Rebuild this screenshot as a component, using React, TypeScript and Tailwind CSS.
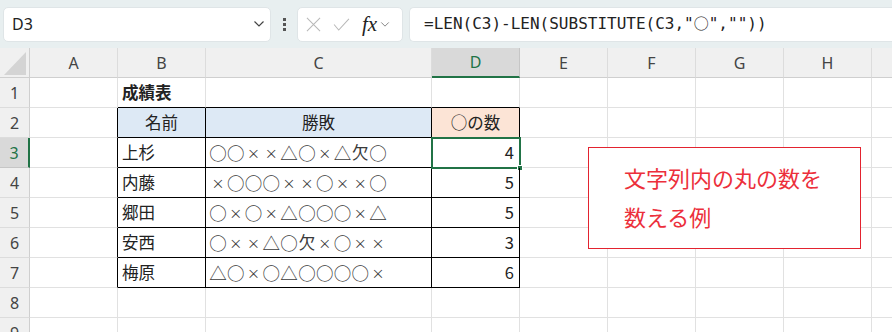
import React from 'react';

const cols = ['A', 'B', 'C', 'D', 'E', 'F', 'G', 'H', 'I'];
const colWidths = [88, 88, 226, 88, 88, 88, 88, 88, 88];

const rows = [
  { name: '上杉', result: '○○××△○×△欠○', count: 4 },
  { name: '内藤', result: '×○○○××○××○', count: 5 },
  { name: '郷田', result: '○×○×△○○○×△', count: 5 },
  { name: '安西', result: '○××△○欠×○××', count: 3 },
  { name: '梅原', result: '△○×○△○○○○×', count: 6 },
];

const jp = "font-['Noto_Sans_CJK_JP',sans-serif]";
const head = "font-['Noto_Sans',sans-serif]";

type CellProps = {
  children?: React.ReactNode;
  className?: string;
};

const Cell: React.FC<CellProps> = ({ children, className = '' }) => (
  <div className={`h-[30px] border-r border-b flex items-center overflow-visible whitespace-nowrap ${className}`}>
    {children}
  </div>
);

// each mark sits on a fixed full-width pitch; the cross is drawn smaller as in the sheet
function Marks({ text }: { text: string }) {
  return (
    <span className="flex items-center">
      {Array.from(text).map((ch, i) => (
        <span
          key={i}
          className={`inline-block w-[17.8px] text-center leading-none ${
            ch === '×' ? 'text-[13px]' : ch === '欠' ? 'text-[16.5px]' : 'text-[17.5px]'
          }`}
        >
          {ch}
        </span>
      ))}
    </span>
  );
}

function Chevron({ className = '' }: { className?: string }) {
  return (
    <svg viewBox="0 0 12 8" className={className} fill="none" stroke="currentColor" strokeWidth="1.2">
      <path d="M1.5 1.5 6 6l4.5-4.5" />
    </svg>
  );
}

function TopBar() {
  return (
    <div className="h-[48px] bg-[#e8eff0] flex items-center pl-[3px] gap-[6px]">
      <div className="w-[268px] h-[35px] bg-white rounded-[5px] border border-[#dfe5e7] flex items-center justify-between pl-[8px] pr-[5px]">
        <span className={`${head} text-[16px] text-[#222]`}>D3</span>
        <Chevron className="w-[12px] h-[8px] text-[#444]" />
      </div>
      <div className="w-[14px] flex flex-col items-center gap-[2px]">
        <span className="w-[3px] h-[3px] bg-[#555]" />
        <span className="w-[3px] h-[3px] bg-[#555]" />
        <span className="w-[3px] h-[3px] bg-[#555]" />
      </div>
      <div className="w-[106px] h-[35px] bg-white rounded-[5px] border border-[#dfe5e7] flex items-center pl-[8px] gap-[12px]">
        <svg viewBox="0 0 16 16" className="w-[15px] h-[15px] text-[#b8b8b8]" fill="none" stroke="currentColor" strokeWidth="1.1">
          <path d="M1 1l14 14M15 1 1 15" />
        </svg>
        <svg viewBox="0 0 18 14" className="w-[17px] h-[13px] text-[#b8b8b8]" fill="none" stroke="currentColor" strokeWidth="1.1">
          <path d="M1 7l5 6L17 1" />
        </svg>
        <div className="flex items-center gap-[3px]">
          <span className="font-['Liberation_Serif',serif] italic text-[21px] leading-none text-[#222]">fx</span>
          <Chevron className="w-[10px] h-[7px] text-[#888]" />
        </div>
      </div>
      <div className="flex-1 h-[35px] bg-white rounded-l-[5px] border border-r-0 border-[#dfe5e7] flex items-center pl-[14px]">
        <span className="font-['DejaVu_Sans_Mono',monospace] text-[16px] text-[#222]">
          =LEN(C3)-LEN(SUBSTITUTE(C3,"<span className={`${jp} text-[15px]`}>○</span>",""))
        </span>
      </div>
    </div>
  );
}

export default function App() {
  const gridCols = `30px ${colWidths.map((w) => `${w}px`).join(' ')}`;
  const grid = 'border-[#e1e1e1]';
  const blk = 'border-black';

  return (
    <div className="w-[892px] h-[332px] overflow-hidden bg-white relative">
      <TopBar />
      <div className="grid" style={{ gridTemplateColumns: gridCols }}>
        {/* header row */}
        <div className="h-[30px] bg-[#f0f0f0] border-r border-b border-[#cfcfcf] relative">
          <svg viewBox="0 0 30 30" className="absolute inset-0 w-[30px] h-[30px]">
            <polygon points="26,4 26,27 4,27" fill="#d4d4d4" />
          </svg>
        </div>
        {cols.map((c) => (
          <div
            key={c}
            className={`h-[30px] flex items-center justify-center ${head} text-[16px] border-r ${
              c === 'D'
                ? 'bg-[#d9d9d9] text-[#217346] border-b-2 border-b-[#217346] border-r-[#c6c6c6]'
                : 'bg-[#f0f0f0] text-[#444] border-b border-[#cfcfcf] border-r-[#dcdcdc]'
            }`}
          >
            {c}
          </div>
        ))}

        {Array.from({ length: 9 }).map((_, i) => {
          const r = i + 1;
          const inTable = r >= 2 && r <= 7;
          const data = r >= 3 && r <= 7 ? rows[r - 3] : null;
          return (
            <React.Fragment key={r}>
              <div
                className={`h-[30px] flex items-center justify-center ${head} text-[16px] border-b ${
                  r === 3
                    ? 'bg-[#d9d9d9] text-[#217346] border-r-2 border-r-[#217346] border-b-[#c6c6c6]'
                    : 'bg-[#f0f0f0] text-[#444] border-r border-[#cfcfcf] border-b-[#dcdcdc]'
                }`}
              >
                {r}
              </div>
              {/* A */}
              <Cell className={`${grid} ${inTable ? 'border-r-black' : ''}`} />
              {/* B */}
              <Cell
                className={`${jp} text-[16.5px] text-[#222] ${inTable ? blk : r === 1 ? `${grid} border-b-black` : grid} ${
                  r === 1 ? 'font-bold pl-[4px]' : r === 2 ? 'justify-center bg-[#dde9f5]' : 'pl-[4px]'
                }`}
              >
                {r === 1 && '成績表'}
                {r === 2 && '名前'}
                {data && data.name}
              </Cell>
              {/* C */}
              <Cell
                className={`${jp} text-[16.5px] ${r === 2 ? 'text-[#222]' : 'text-[#3a3a3a]'} ${inTable ? blk : r === 1 ? `${grid} border-b-black` : grid} ${
                  r === 2 ? 'justify-center bg-[#dde9f5]' : 'pl-[3px]'
                }`}
              >
                {r === 2 && '勝敗'}
                {data && <Marks text={data.result} />}
              </Cell>
              {/* D */}
              <div className="relative">
                <Cell
                  className={`${jp} text-[16.5px] text-[#222] ${inTable ? blk : r === 1 ? `${grid} border-b-black` : grid} ${
                    r === 2 ? 'justify-center bg-[#fce4d6]' : 'justify-end pr-[5px]'
                  }`}
                >
                  {r === 2 && '○の数'}
                  {data && data.count}
                </Cell>
                {r === 3 && (
                  <>
                    <div className="absolute -left-[1px] -top-[1px] w-[90px] h-[32px] border-2 border-[#217346]" />
                    <div className="absolute -right-[3px] -bottom-[3px] w-[6px] h-[6px] bg-[#217346] border border-white" />
                  </>
                )}
              </div>
              {cols.slice(4).map((c) => (
                <Cell key={c} className={grid} />
              ))}
            </React.Fragment>
          );
        })}
      </div>

      {/* floating text box */}
      <div className="absolute left-[588px] top-[147px] w-[273px] h-[102px] border border-[#e3232f] bg-white pl-[35px] pt-[10px]">
        <p className={`${jp} text-[22px] leading-[39px] text-[#ec2f3b]`}>
          文字列内の丸の数を
          <br />
          数える例
        </p>
      </div>
    </div>
  );
}
